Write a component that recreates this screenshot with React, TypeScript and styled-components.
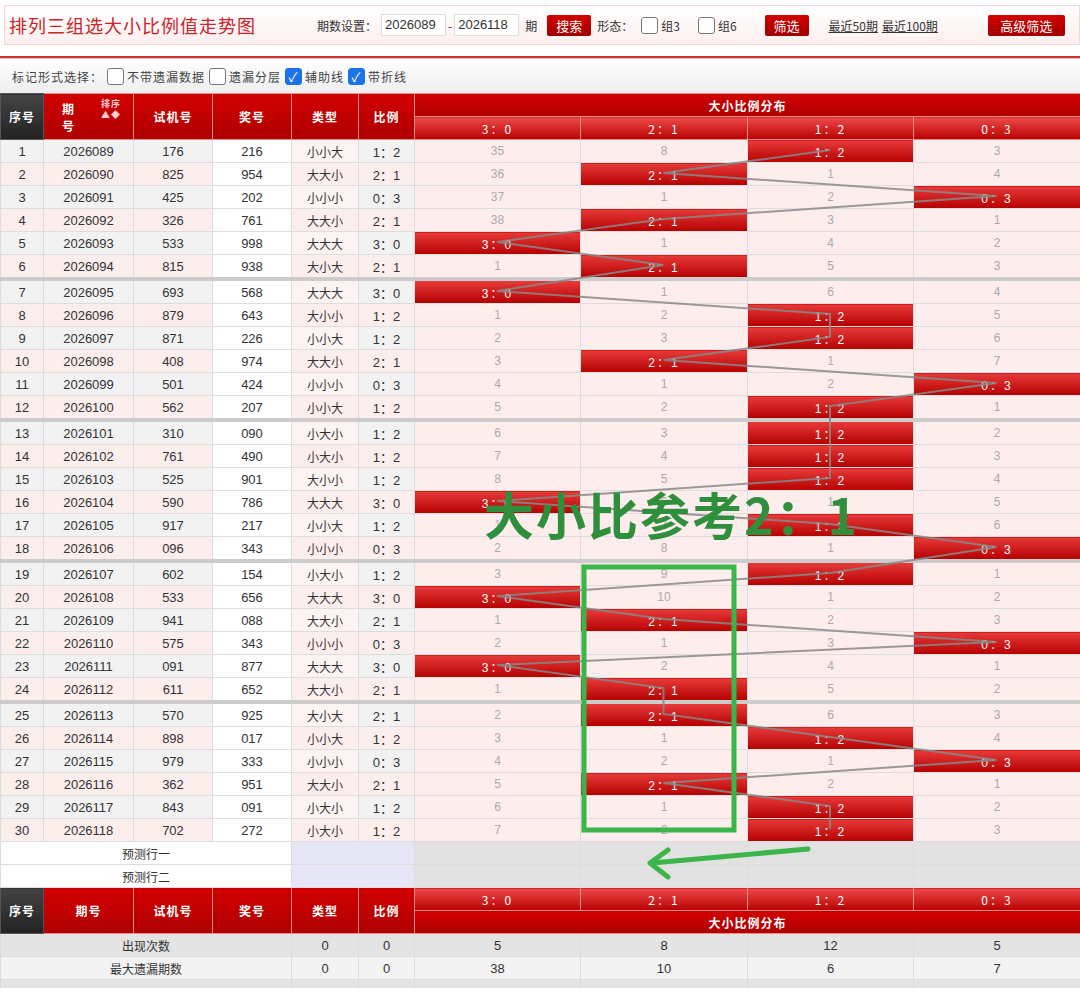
import React from 'react'
import styled, { createGlobalStyle } from 'styled-components'

const GlobalStyle = createGlobalStyle`
	body {
		margin: 0;
		background: #fff;
		font-family: 'Liberation Sans', 'Noto Sans CJK SC', sans-serif;
		font-size: 13px;
		color: #333;
	}
`

type Row = [string, string, string, string, number]

// trial, number, type, ratio index (0 = 3:0 ... 3 = 0:3)
const rows: Row[] = [
	['176', '216', '小小大', '1：2', 2],
	['825', '954', '大大小', '2：1', 1],
	['425', '202', '小小小', '0：3', 3],
	['326', '761', '大大小', '2：1', 1],
	['533', '998', '大大大', '3：0', 0],
	['815', '938', '大小大', '2：1', 1],
	['693', '568', '大大大', '3：0', 0],
	['879', '643', '大小小', '1：2', 2],
	['871', '226', '小小大', '1：2', 2],
	['408', '974', '大大小', '2：1', 1],
	['501', '424', '小小小', '0：3', 3],
	['562', '207', '小小大', '1：2', 2],
	['310', '090', '小大小', '1：2', 2],
	['761', '490', '小大小', '1：2', 2],
	['525', '901', '大小小', '1：2', 2],
	['590', '786', '大大大', '3：0', 0],
	['917', '217', '小小大', '1：2', 2],
	['096', '343', '小小小', '0：3', 3],
	['602', '154', '小大小', '1：2', 2],
	['533', '656', '大大大', '3：0', 0],
	['941', '088', '大大小', '2：1', 1],
	['575', '343', '小小小', '0：3', 3],
	['091', '877', '大大大', '3：0', 0],
	['611', '652', '大大小', '2：1', 1],
	['570', '925', '大小大', '2：1', 1],
	['898', '017', '小小大', '1：2', 2],
	['979', '333', '小小小', '0：3', 3],
	['362', '951', '大大小', '2：1', 1],
	['843', '091', '小大小', '1：2', 2],
	['702', '272', '小大小', '1：2', 2],
]

const labels = ['3：0', '2：1', '1：2', '0：3']
const colW = [43, 90, 79, 79, 67, 56, 166, 167, 166, 167]
const ROW_H = 23
const TOP = 46

const rowTop = (i: number) => TOP + i * ROW_H + Math.floor(i / 6) * 3

const TopBar = styled.div`
	margin: 5px 0 0 4px;
	height: 38px;
	border: 1px solid #f3d6d6;
	background: linear-gradient(#fff, #fdeeee);
	display: flex;
	align-items: center;
	padding: 0 0 0 4px;
	font-family: 'Noto Sans CJK SC', sans-serif;
`
const Title = styled.h1`
	margin: 0;
	font-size: 18px;
	font-weight: normal;
	color: #c8242a;
	letter-spacing: 1px;
	width: 308px;
`
const Label = styled.span`
	font-size: 12px;
	color: #333;
	margin-right: 4px;
`
const Input = styled.span`
	display: inline-block;
	width: 60px;
	height: 20px;
	border: 1px solid #ddd;
	background: #fff;
	font-family: 'Liberation Sans', sans-serif;
	font-size: 13px;
	line-height: 20px;
	padding-left: 3px;
`
const RedButton = styled.span<{ $w: number }>`
	display: inline-block;
	width: ${(p) => p.$w}px;
	height: 21px;
	line-height: 21px;
	text-align: center;
	color: #fff;
	font-size: 13px;
	background: linear-gradient(#d40000, #a00000);
	border-radius: 2px;
	margin: 0 6px;
`
const Box = styled.span<{ $checked?: boolean }>`
	display: inline-block;
	width: 15px;
	height: 15px;
	border: 1px solid #777;
	border-radius: 3px;
	background: ${(p) => (p.$checked ? '#1a73e8' : '#fff')};
	border-color: ${(p) => (p.$checked ? '#1a73e8' : '#777')};
	margin: 0 3px 0 4px;
	color: #fff;
	font-size: 13px;
	line-height: 15px;
	text-align: center;
`
const Link = styled.span`
	font-size: 12px;
	text-decoration: underline;
	color: #333;
	margin-right: 4px;
`
const Spacer = styled.span<{ $w: number }>`
	display: inline-block;
	width: ${(p) => p.$w}px;
`
const RedLine = styled.div`
	margin-top: 11px;
	height: 2px;
	background: #c33;
	border-bottom: 1px solid #f1c0c0;
`
const Toolbar = styled.div`
	height: 34px;
	background: linear-gradient(#fff, #eee);
	display: flex;
	align-items: center;
	padding-left: 12px;
	font-family: 'Noto Sans CJK SC', sans-serif;
	font-size: 12px;
	color: #444;
	letter-spacing: 1px;
`
const Wrap = styled.div`
	position: relative;
`
const Table = styled.table`
	width: 1080px;
	border-collapse: collapse;
	table-layout: fixed;
	text-align: center;
`
const Th = styled.th<{ $dark?: boolean; $sub?: boolean }>`
	height: 22px;
	padding: 0;
	border: 1px solid #e88;
	color: #fff;
	font-family: 'Noto Sans CJK SC', sans-serif;
	font-size: 12px;
	background: ${(p) =>
		p.$dark
			? 'linear-gradient(#444, #222)'
			: p.$sub
				? 'linear-gradient(#ee4a4a, #b80000)'
				: 'linear-gradient(#d20000, #ad0000)'};
	border-color: ${(p) => (p.$dark ? '#555' : '#f08a8a')};
	font-weight: ${(p) => (p.$sub ? 'normal' : 'bold')};
	letter-spacing: ${(p) => (p.$sub ? '2px' : '1px')};
`
const Td = styled.td<{ $bg: string; $thick?: boolean }>`
	height: ${ROW_H - 1}px;
	padding: 0;
	border: 1px solid #ddd;
	border-top: ${(p) => (p.$thick ? '4px solid #ccc' : '1px solid #ddd')};
	background: ${(p) => p.$bg};
	font-size: 13px;
	color: #333;
`
const Miss = styled(Td)`
	color: #aaa;
	font-size: 12px;
`
const Hit = styled.td<{ $thick?: boolean }>`
	padding: 0;
	border: 1px solid #ddd;
	border-top: ${(p) => (p.$thick ? '4px solid #ccc' : '1px solid #ddd')};
	background: linear-gradient(#e83a3a, #b50000);
	color: #fff;
	font-size: 12px;
	letter-spacing: 2px;
`
const Cjk = styled.span`
	font-family: 'Noto Sans CJK SC', sans-serif;
	font-size: 12px;
`
const SortTag = styled.span`
	position: absolute;
	right: 12px;
	top: 4px;
	font-size: 9px;
	line-height: 11px;
	color: #ffd0d0;
`
const Overlay = styled.svg`
	position: absolute;
	left: 0;
	top: 0;
	pointer-events: none;
`
const Note = styled.div`
	position: absolute;
	left: 484px;
	top: 390px;
	font-family: 'Noto Sans CJK SC', sans-serif;
	font-weight: bold;
	font-size: 50px;
	line-height: 60px;
	color: #2f8f3c;
	letter-spacing: 2px;
`

const App = () => {
	const miss = [34, 7, 0, 2]
	const table = rows.map((r) => {
		const m = miss.map((v, k) => (k === r[4] ? 0 : v + 1))
		for (let k = 0; k < 4; k++) miss[k] = m[k]
		return m
	})
	const pts = rows
		.map((r, i) => `${414 + 83 + r[4] * 166.5},${rowTop(i) + 11}`)
		.join(' ')

	return (
		<>
			<GlobalStyle />
			<TopBar>
				<Title>排列三组选大小比例值走势图</Title>
				<Label>期数设置：</Label>
				<Input>2026089</Input>
				<Label style={{ margin: '0 2px' }}>-</Label>
				<Input>2026118</Input>
				<Label style={{ marginLeft: 6 }}>期</Label>
				<RedButton $w={44}>搜索</RedButton>
				<Label>形态：</Label>
				<Box />
				<Label>组3</Label>
				<Spacer $w={10} />
				<Box />
				<Label>组6</Label>
				<Spacer $w={18} />
				<RedButton $w={44}>筛选</RedButton>
				<Spacer $w={14} />
				<Link>最近50期</Link>
				<Link>最近100期</Link>
				<Spacer $w={40} />
				<RedButton $w={77}>高级筛选</RedButton>
			</TopBar>
			<RedLine />
			<Toolbar>
				标记形式选择：<Box />不带遗漏数据<Box />遗漏分层<Box $checked>✓</Box>辅助线
				<Box $checked>✓</Box>带折线
			</Toolbar>
			<Wrap>
				<Table>
					<colgroup>
						{colW.map((w, i) => (
							<col key={i} style={{ width: w }} />
						))}
					</colgroup>
					<thead>
						<tr>
							<Th $dark rowSpan={2}>序号</Th>
							<Th rowSpan={2} style={{ position: 'relative', textAlign: 'left', paddingLeft: 18 }}>
								期<br />号<SortTag>排序<br />▲◆</SortTag>
							</Th>
							<Th rowSpan={2}>试机号</Th>
							<Th rowSpan={2}>奖号</Th>
							<Th rowSpan={2}>类型</Th>
							<Th rowSpan={2}>比例</Th>
							<Th colSpan={4}>大小比例分布</Th>
						</tr>
						<tr>
							{labels.map((l) => (
								<Th $sub key={l}>{l}</Th>
							))}
						</tr>
					</thead>
					<tbody>
						{rows.map((r, i) => {
							const bg = i % 2 ? '#fdeeee' : '#f2f2f2'
							const thick = i > 0 && i % 6 === 0
							return (
								<tr key={i}>
									<Td $bg={bg} $thick={thick}>{i + 1}</Td>
									<Td $bg={bg} $thick={thick}>{2026089 + i}</Td>
									<Td $bg={bg} $thick={thick}>{r[0]}</Td>
									<Td $bg='#fff' $thick={thick}>{r[1]}</Td>
									<Td $bg={i % 2 ? '#fdeeee' : '#fdf3f3'} $thick={thick}>
										<Cjk>{r[2]}</Cjk>
									</Td>
									<Td $bg={bg} $thick={thick}>{r[3]}</Td>
									{table[i].map((v, k) =>
										k === r[4] ? (
											<Hit key={k} $thick={thick}>{labels[k]}</Hit>
										) : (
											<Miss key={k} $bg='#fdeded' $thick={thick}>{v}</Miss>
										),
									)}
								</tr>
							)
						})}
						{['预测行一', '预测行二'].map((t) => (
							<tr key={t}>
								<Td $bg='#fff' colSpan={4}><Cjk>{t}</Cjk></Td>
								<Td $bg='#e6e6f6' colSpan={2} />
								{labels.map((l) => (
									<Td key={l} $bg='#e2e2e2' />
								))}
							</tr>
						))}
						<tr>
							<Th $dark rowSpan={2}>序号</Th>
							<Th rowSpan={2}>期号</Th>
							<Th rowSpan={2}>试机号</Th>
							<Th rowSpan={2}>奖号</Th>
							<Th rowSpan={2}>类型</Th>
							<Th rowSpan={2}>比例</Th>
							{labels.map((l) => (
								<Th $sub key={l}>{l}</Th>
							))}
						</tr>
						<tr>
							<Th colSpan={4}>大小比例分布</Th>
						</tr>
						<tr>
							<Td $bg='#e4e4e4' colSpan={4}><Cjk>出现次数</Cjk></Td>
							<Td $bg='#e4e4e4'>0</Td>
							<Td $bg='#e4e4e4'>0</Td>
							{[5, 8, 12, 5].map((v, k) => (
								<Td key={k} $bg='#e4e4e4'>{v}</Td>
							))}
						</tr>
						<tr>
							<Td $bg='#f3f3f3' colSpan={4}><Cjk>最大遗漏期数</Cjk></Td>
							<Td $bg='#f3f3f3'>0</Td>
							<Td $bg='#f3f3f3'>0</Td>
							{[38, 10, 6, 7].map((v, k) => (
								<Td key={k} $bg='#f3f3f3'>{v}</Td>
							))}
						</tr>
						<tr>
							<Td $bg='#e4e4e4' colSpan={4} />
							<Td $bg='#e4e4e4' />
							<Td $bg='#e4e4e4' />
							{labels.map((l) => (
								<Td key={l} $bg='#e4e4e4' />
							))}
						</tr>
					</tbody>
				</Table>
				<Overlay width={1080} height={900}>
					<polyline points={pts} fill='none' stroke='#888' strokeWidth={2} opacity={0.85} />
					<rect x={584} y={474} width={150} height={263} fill='none' stroke='#3bb54a' strokeWidth={5} />
					<path d='M808 756 L652 770 M668 757 L650 770 L668 784' fill='none' stroke='#3bb54a' strokeWidth={5} strokeLinecap='round' strokeLinejoin='round' />
				</Overlay>
				<Note>大小比参考2：1</Note>
			</Wrap>
		</>
	)
}

export default App
